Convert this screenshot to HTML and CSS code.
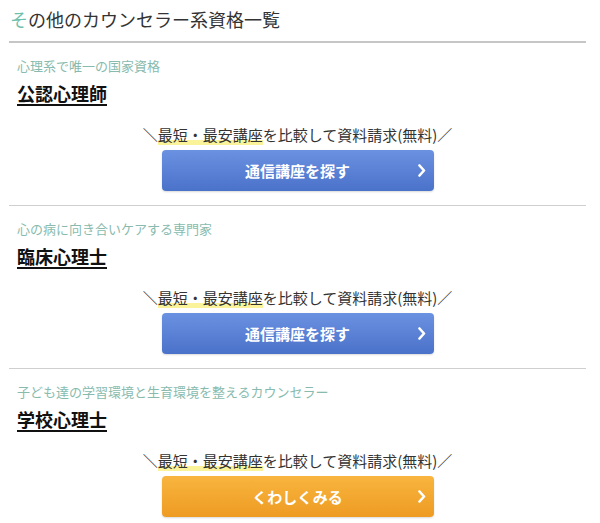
FILE: index.html
```html
<!DOCTYPE html>
<html lang="ja">
<head>
    <meta charset="UTF-8">
    <meta name="viewport" content="width=device-width, initial-scale=1.0">
    <title>その他のカウンセラー系資格一覧</title>
    <link rel="stylesheet" href="styles.css">
</head>
<body>
    <div class="container">
        <h2 class="list-title"><span class="first">そ</span>の他のカウンセラー系資格一覧</h2>

        <div class="item">
            <p class="item-sub">心理系で唯一の国家資格</p>
            <h3 class="item-name">公認心理師</h3>
            <p class="cta-text">＼<span class="marker">最短・最安講座</span>を比較して資料請求(無料)／</p>
            <a href="#" class="cta-button blue">
                <span class="label">通信講座を探す</span>
                <svg class="arrow" width="8" height="13" viewBox="0 0 8 13"><polyline points="1.5,1.5 6,6.5 1.5,11.5" fill="none" stroke="#fff" stroke-width="2.6" stroke-linecap="round" stroke-linejoin="round"/></svg>
            </a>
        </div>

        <div class="item">
            <p class="item-sub">心の病に向き合いケアする専門家</p>
            <h3 class="item-name">臨床心理士</h3>
            <p class="cta-text">＼<span class="marker">最短・最安講座</span>を比較して資料請求(無料)／</p>
            <a href="#" class="cta-button blue">
                <span class="label">通信講座を探す</span>
                <svg class="arrow" width="8" height="13" viewBox="0 0 8 13"><polyline points="1.5,1.5 6,6.5 1.5,11.5" fill="none" stroke="#fff" stroke-width="2.6" stroke-linecap="round" stroke-linejoin="round"/></svg>
            </a>
        </div>

        <div class="item last">
            <p class="item-sub">子ども達の学習環境と生育環境を整えるカウンセラー</p>
            <h3 class="item-name">学校心理士</h3>
            <p class="cta-text">＼<span class="marker">最短・最安講座</span>を比較して資料請求(無料)／</p>
            <a href="#" class="cta-button orange">
                <span class="label">くわしくみる</span>
                <svg class="arrow" width="8" height="13" viewBox="0 0 8 13"><polyline points="1.5,1.5 6,6.5 1.5,11.5" fill="none" stroke="#fff" stroke-width="2.6" stroke-linecap="round" stroke-linejoin="round"/></svg>
            </a>
        </div>
    </div>
</body>
</html>
```

FILE: styles.css
```css
body {
    font-family: "Noto Sans CJK JP", "Noto Sans", sans-serif;
    background-color: #fff;
    color: #333;
    margin: 0;
}
.container {
    padding: 0 14px 0 9px;
}
.list-title {
    font-size: 18px;
    font-weight: normal;
    line-height: 26px;
    margin: 0;
    padding: 6px 1px 9px;
    border-bottom: 2px solid #c6c6c6;
    color: #333;
}
.list-title .first {
    color: #6cc0ac;
}
.item {
    padding: 14px 0 14px 8px;
    border-bottom: 1px solid #cfcfcf;
    display: flex;
    flex-direction: column;
}
.item.last {
    border-bottom: none;
}
.item-sub {
    margin: 0;
    font-size: 13px;
    line-height: 18px;
    color: #88bbae;
}
.item-name {
    margin: 6px 0 0;
    font-size: 18px;
    line-height: 24px;
    font-weight: bold;
    color: #111;
    text-decoration: underline;
    text-decoration-thickness: 2px;
    text-underline-offset: 3px;
    align-self: flex-start;
}
.cta-text {
    margin: 20px 0 0;
    margin-left: -8px;
    font-size: 15px;
    line-height: 20px;
    text-align: center;
    color: #333;
}
.marker {
    background: linear-gradient(transparent 78%, #fbf39a 78%);
}
.cta-button {
    display: grid;
    grid-template-columns: 1fr auto 1fr;
    align-items: center;
    width: 272px;
    height: 41px;
    margin: 5px auto 0;
    margin-left: calc(50% - 140px);
    border-radius: 4px;
    color: #fff;
    text-decoration: none;
    font-size: 15px;
    font-weight: bold;
    box-shadow: 0 1px 2px rgba(0, 0, 0, 0.15);
}
.cta-button .label {
    grid-column: 2;
}
.cta-button .arrow {
    grid-column: 3;
    justify-self: end;
    margin-right: 8px;
}
.cta-button.blue {
    background: linear-gradient(#6b91e1, #4a72c9);
}
.cta-button.orange {
    background: linear-gradient(#f8b53f, #ee9b22);
}
```
